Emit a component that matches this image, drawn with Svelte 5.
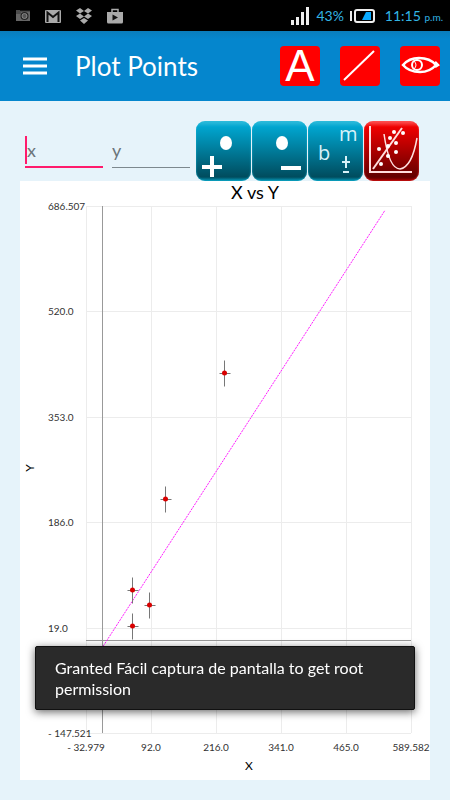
<script lang="ts">
  type Point = { x: number; y: number };

  const range = { x0: -32.979, x1: 589.582, y0: -147.521, y1: 686.507 };
  const plot = { left: 66, right: 391, top: 25, bottom: 552 };

  const xLabels = ["- 32.979", "92.0", "216.0", "341.0", "465.0", "589.582"];
  const yLabels = ["686.507", "520.0", "353.0", "186.0", "19.0", "- 147.521"];

  const points: Point[] = [
    { x: 232.5, y: 422 },
    { x: 119.5, y: 223 },
    { x: 55.5, y: 79 },
    { x: 88.5, y: 55 },
    { x: 55.5, y: 22 },
  ];

  const fit: Point[] = [
    { x: 0, y: -10 },
    { x: 540, y: 680 },
  ];

  let xValue = $state("");
  let yValue = $state("");

  function sx(x: number): number {
    return plot.left + ((x - range.x0) / (range.x1 - range.x0)) * (plot.right - plot.left);
  }

  function sy(y: number): number {
    return plot.bottom - ((y - range.y0) / (range.y1 - range.y0)) * (plot.bottom - plot.top);
  }

  const gridX = xLabels.map((_, i) => plot.left + (i * (plot.right - plot.left)) / 5);
  const gridY = yLabels.map((_, i) => Math.round(plot.top + (i * (plot.bottom - plot.top)) / 5));
</script>

<div class="app">
  <div class="status">
    <div class="status-group notices">
      <svg width="16" height="16" viewBox="0 0 16 16">
        <path d="M1 3V2h4v1h10v10H1z" fill="#666" />
        <path d="M1 5h5M1 3h14" stroke="#333" fill="none" />
        <circle cx="9.5" cy="8" r="4" fill="#222" />
        <circle cx="9.5" cy="8" r="2.5" fill="#555" stroke="#888" />
      </svg>
      <svg width="16" height="16" viewBox="0 0 16 16">
        <rect x="0" y="2" width="16" height="13" rx="1" fill="#aaa" />
        <path d="M2.500 14V4.500L8 9l5.500-4.500V14" stroke="#111" stroke-width="2" fill="none" />
      </svg>
      <svg width="18" height="16" viewBox="0 0 18 16" fill="#aaa">
        <path d="M5 0l4 3-4 2.500-4-3zM13 0l4 2.500-4 3L9 3zM5 5.500L9 8.500l-4 2.500-4-3zM13 5.500l4 2.500-4 3-4-2.500zM9 10l4 2.500L9 16l-4-3.500z" />
      </svg>
      <svg width="16" height="16" viewBox="0 0 16 16">
        <path d="M5 4V1.500h6V4" stroke="#aaa" stroke-width="1.500" fill="none" />
        <path d="M0 4h16v10q0 1.500-1.500 1.500h-13Q0 15.500 0 14z" fill="#aaa" />
        <path d="M5.500 6.500v6L11 9.500z" fill="#111" />
      </svg>
    </div>
    <div class="status-group readings">
      <svg width="19" height="19" viewBox="0 0 19 19" fill="#eee">
        <path d="M0 14h3v5H0zM5 11h3v8H5zM10 6h3v13h-3zM15 1h3v18h-3z" />
      </svg>
      <span class="battery">43%</span>
      <svg width="25" height="16" viewBox="0 0 25 16">
        <path d="M1 3v10" stroke="#eee" stroke-width="2" />
        <rect x="5" y="2" width="19" height="12" rx="2" fill="none" stroke="#eee" stroke-width="2" />
        <path d="M16 4h5v8h-9z" fill="#0aaaff" />
      </svg>
      <span class="clock">11:15 <small>p.m.</small></span>
    </div>
  </div>

  <header class="toolbar">
    <button class="menu" aria-label="Menu">
      <svg width="24" height="18" viewBox="0 0 24 18">
        <path d="M0 2h24M0 9h24M0 16h24" stroke="#fff" stroke-width="3" />
      </svg>
    </button>
    <h1>Plot Points</h1>
    <div class="tools">
      <button class="tool letter" aria-label="Labels">A</button>
      <button class="tool" aria-label="Line">
        <svg width="40" height="40" viewBox="0 0 40 40">
          <path d="M4 34L34 5" stroke="#fff" stroke-width="2" />
        </svg>
      </button>
      <button class="tool" aria-label="View">
        <svg width="40" height="40" viewBox="0 0 40 40" fill="none" stroke="#fff">
          <path d="M3 19Q9 12 19 12Q30 12 36 19Q30 26 20 26Q9 26 3 19zM35 16l3 3-3 2" stroke-width="2.500" />
          <circle cx="17" cy="19" r="5" stroke-width="2" />
          <path d="M14 15q4 4 0 8" stroke-width="1" />
        </svg>
      </button>
    </div>
  </header>

  <main>
    <form class="entry" onsubmit={(e) => e.preventDefault()}>
      <div class="fields">
        <div class="field focused">
          <input aria-label="x" placeholder="x" bind:value={xValue} />
        </div>
        <div class="field">
          <input aria-label="y" placeholder="y" bind:value={yValue} />
        </div>
      </div>
      <div class="actions">
        <button class="action" type="button" aria-label="Add point">
          <svg width="55" height="60" viewBox="0 0 55 60">
            <ellipse cx="30" cy="22" rx="6" ry="7" fill="#fff" />
            <path d="M6 46h20M16 35v21" stroke="#fff" stroke-width="4" />
          </svg>
        </button>
        <button class="action" type="button" aria-label="Remove point">
          <svg width="55" height="60" viewBox="0 0 55 60">
            <ellipse cx="30" cy="22" rx="6" ry="7" fill="#fff" />
            <path d="M29 47h20" stroke="#fff" stroke-width="4" />
          </svg>
        </button>
        <button class="action" type="button" aria-label="Slope and intercept">
          <svg width="55" height="60" viewBox="0 0 55 60" fill="#d8f2f8">
            <text class="symbol" x="31" y="20">m</text>
            <text class="symbol" x="10" y="39">b</text>
            <path d="M34 41h8M38 35v12M35 51h6" stroke="#d8f2f8" stroke-width="2" />
          </svg>
        </button>
        <button class="action red" type="button" aria-label="Fit curve">
          <svg width="55" height="60" viewBox="0 0 55 60" fill="none" stroke="#ffdede">
            <path d="M6 5v46h42" stroke-width="2" />
            <path d="M9 48L38 7" stroke-width="2" />
            <path d="M20 13Q25 48 36 48Q48 46 53 17" stroke-width="1.500" />
            <g fill="#fff" stroke="none">
              <circle cx="15" cy="28" r="2" />
              <circle cx="17" cy="43" r="2" />
              <circle cx="24" cy="35" r="2" />
              <circle cx="24" cy="25" r="2" />
              <circle cx="26" cy="17" r="2" />
              <circle cx="30" cy="11" r="2" />
              <circle cx="39" cy="12" r="2" />
              <circle cx="32" cy="22" r="2" />
              <circle cx="32" cy="31" r="2" />
            </g>
          </svg>
        </button>
      </div>
    </form>

    <svg class="chart" viewBox="0 0 410 599" role="img" aria-label="X vs Y">
      <text class="title" x="235" y="18">X vs Y</text>

      {#each gridX as x, i}
        <line class="grid" x1={x + 0.5} x2={x + 0.5} y1={plot.top} y2={plot.bottom} />
        <text class="tick" x={x} y="570" text-anchor="middle">{xLabels[i]}</text>
      {/each}
      {#each gridY as y, i}
        <line class="grid" x1={plot.left} x2={plot.right} y1={y + 0.5} y2={y + 0.5} />
        <text class="tick" x="28" y={y + 4}>{yLabels[i]}</text>
      {/each}

      <line class="axis" x1={Math.floor(sx(0)) - 0.5} x2={Math.floor(sx(0)) - 0.5} y1={plot.top} y2={plot.bottom} />
      <line class="axis" x1={plot.left} x2={plot.right} y1={Math.ceil(sy(0)) + 0.5} y2={Math.ceil(sy(0)) + 0.5} />

      <line class="fit" x1={sx(fit[0].x)} y1={sy(fit[0].y)} x2={sx(fit[1].x)} y2={sy(fit[1].y)} />

      {#each points as p}
        {@const cx = Math.floor(sx(p.x)) + 0.5}
        {@const cy = Math.round(sy(p.y)) + 0.5}
        <path class="bars" d="M{cx - 5} {cy}h11M{cx} {cy - 13}v26" />
        <circle cx={cx} cy={cy - 0.5} r="2.5" fill="#d90000" />
      {/each}

      <text class="label" x="229" y="589" text-anchor="middle">X</text>
      <text class="label" transform="translate(14 287) rotate(-90)" text-anchor="middle">Y</text>
    </svg>
  </main>

  <div class="toast" role="status">
    Granted Fácil captura de pantalla to get root permission
  </div>
</div>

<style>
  :global(body) {
    margin: 0;
    background: #e6f3fa;
    font-family: Lato, "Open Sans", sans-serif;
  }

  .app {
    min-height: 100vh;
  }

  button {
    border: 0;
    padding: 0;
    background: none;
    font-family: inherit;
    cursor: pointer;
  }

  svg {
    display: block;
  }

  .status {
    display: flex;
    align-items: center;
    justify-content: space-between;
    box-sizing: border-box;
    height: 31px;
    padding: 0 7px 0 15px;
    background: #000;
  }

  .status-group {
    display: flex;
    align-items: center;
  }

  .notices {
    gap: 14px;
  }

  .readings {
    gap: 6px;
    color: #33b5e5;
    font-size: 14px;
  }

  .clock {
    margin-left: 4px;
  }

  .clock small {
    font-size: 10px;
  }

  .toolbar {
    display: flex;
    align-items: center;
    box-sizing: border-box;
    height: 70px;
    padding: 0 10px 0 23px;
    background: linear-gradient(#0a7dbb, #0586cd 8px);
  }

  h1 {
    flex: 1;
    margin: 0 0 0 28px;
    color: #fff;
    font-size: 26px;
    font-weight: 400;
    line-height: 32px;
  }

  .tools {
    display: flex;
    gap: 20px;
  }

  .tool {
    width: 40px;
    height: 40px;
    border-radius: 4px;
    background: #f00;
    color: #fff;
  }

  .letter {
    font-family: "Liberation Sans", sans-serif;
    font-size: 44px;
    line-height: 40px;
  }

  main {
    padding: 20px;
  }

  .entry {
    display: flex;
    padding: 0 11px 0 5px;
    gap: 6px;
  }

  .fields {
    display: flex;
    flex: 1;
    gap: 9px;
    min-width: 0;
  }

  .field {
    flex: 1;
    box-sizing: border-box;
    height: 47px;
    min-width: 0;
    padding-top: 15px;
    border-bottom: 1px solid #7d888e;
  }

  .focused {
    border-bottom: 2px solid #ff1a6c;
  }

  input {
    display: block;
    box-sizing: border-box;
    width: 100%;
    height: 28px;
    padding: 0;
    border: 0;
    outline: 0;
    background: none;
    font-family: inherit;
    font-size: 18px;
    caret-color: #ff1a6c;
  }

  .focused input {
    border-left: 2px solid #ff1a6c;
  }

  input::placeholder {
    color: #6c757a;
    opacity: 1;
  }

  .actions {
    display: flex;
    gap: 1px;
  }

  .action {
    width: 55px;
    height: 60px;
    overflow: hidden;
    border-radius: 9px;
    background: linear-gradient(#35bedd, #00a5cf 6px, #004c5e 56px, #0598b8);
    box-shadow: inset 0 0 2px #19b5d5;
  }

  .red {
    background: linear-gradient(#ff5c5c, #ee0000 6px, #620000 56px, #a60000);
    box-shadow: inset 0 0 2px #f33;
  }

  .symbol {
    font-family: "Open Sans", sans-serif;
    font-size: 20px;
  }

  .chart {
    width: 100%;
    height: auto;
    background: #fff;
  }

  .title {
    font-size: 18px;
    text-anchor: middle;
  }

  .tick {
    fill: #333;
    font-size: 10px;
  }

  .label {
    font-size: 12px;
  }

  .grid {
    stroke: #ececec;
  }

  .axis {
    stroke: #999;
  }

  .fit {
    stroke: #ff1aff;
    stroke-dasharray: 2 1;
  }

  .bars {
    fill: none;
    stroke: #777;
  }

  .toast {
    position: fixed;
    right: 35px;
    bottom: 90px;
    left: 35px;
    box-sizing: border-box;
    padding: 10px 19px;
    border: 1px solid #111;
    border-radius: 2px;
    background: #2a2a2a;
    box-shadow: 0 2px 8px rgba(0, 0, 0, 0.6);
    color: #fff;
    font-size: 16px;
    line-height: 21px;
  }
</style>
